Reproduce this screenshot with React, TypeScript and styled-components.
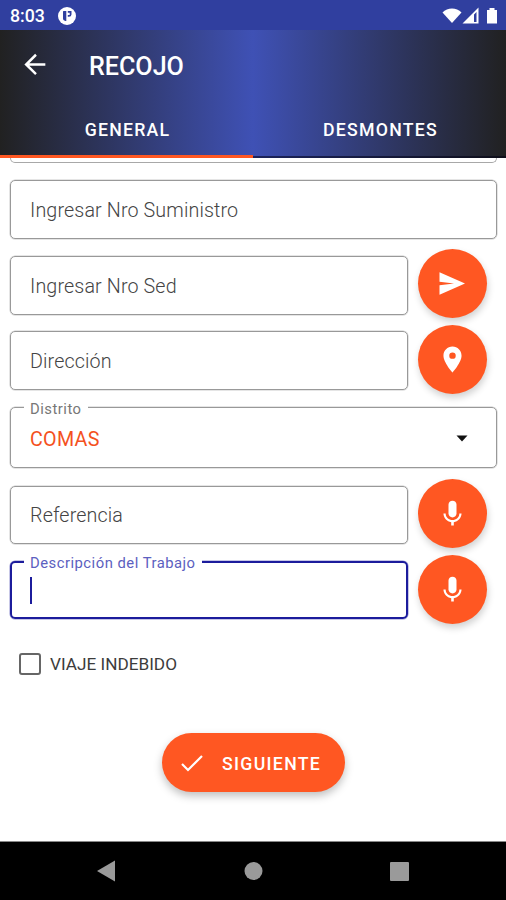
import React from 'react';
import styled, { createGlobalStyle } from 'styled-components';

const Global = createGlobalStyle`
  * { box-sizing: border-box; }
  body { margin: 0; background: #fff; font-family: Roboto, "Liberation Sans", sans-serif; }
`;

const Screen = styled.div`
  width: 506px;
  height: 900px;
  display: flex;
  flex-direction: column;
  overflow: hidden;
  background: #fff;
`;

const StatusBar = styled.div`
  flex: none;
  height: 30px;
  background: #303f9f;
  display: flex;
  align-items: center;
  padding: 2px 7px 0 10px;
  color: #fff;
`;

const Clock = styled.span`
  width: 48px;
  font-size: 17.7px;
  font-weight: 500;
`;

const StatusIcons = styled.div`
  margin-left: auto;
  display: flex;
`;

const Header = styled.header`
  flex: none;
  height: 128px;
  display: flex;
  flex-direction: column;
  background: linear-gradient(90deg, #212121, #3f51b5 50%, #212121);
  color: #fff;
`;

const Toolbar = styled.div`
  height: 70px;
  display: flex;
  align-items: center;
  padding-left: 18px;
`;

const BackButton = styled.button`
  display: flex;
  width: 34px;
  height: 34px;
  padding: 0;
  border: 0;
  background: none;
`;

const Title = styled.h1`
  margin: 3px 0 0 37px;
  font-size: 25.1px;
  font-weight: 500;
`;

const Tabs = styled.div`
  height: 58px;
  display: grid;
  grid-template-columns: 1fr 1fr;
`;

const Tab = styled.div<{ $active?: boolean }>`
  display: flex;
  align-items: center;
  justify-content: center;
  padding: ${p => (p.$active ? 4 : 3)}px 0 0 2px;
  height: 58px;
  font-size: 17.7px;
  font-weight: 500;
  letter-spacing: 1.25px;
  border-bottom: ${p => (p.$active ? '3px solid #ff5722' : '2px solid rgba(0, 0, 20, 0.55)')};
`;

const Form = styled.main`
  flex: 1;
  min-height: 0;
  padding: 0 9px 0 10px;
  display: flex;
  flex-direction: column;
`;

const ClippedField = styled.div`
  flex: none;
  height: 5px;
  margin-bottom: 17px;
  border: 1.5px solid #a8a8a8;
  border-top: 0;
  border-radius: 0 0 5px 5px;
`;

const Row = styled.div<{ $h: number; $gap: number }>`
  flex: none;
  display: flex;
  align-items: center;
  height: ${p => p.$h}px;
  margin-bottom: ${p => p.$gap}px;
`;

const Field = styled.fieldset<{ $wide?: boolean; $focus?: boolean; $h: number }>`
  position: relative;
  flex: none;
  width: ${p => (p.$wide ? 487 : 398)}px;
  height: ${p => p.$h}px;
  margin: 0;
  padding: 0 28px 0 19px;
  display: flex;
  align-items: center;
  justify-content: space-between;
  border: ${p => (p.$focus ? '2px solid #1c1c9c' : '1px solid #999')};
  border-radius: 5px;
  box-shadow: ${p => (p.$focus ? '0 0 0 0.5px #8f8fd0' : '0 0 0 0.5px #ccc')};
`;

const Placeholder = styled.span`
  padding-top: 1px;
  font-size: 19.7px;
  font-weight: 300;
  letter-spacing: 0.13px;
  color: #444;
`;

const FloatLabel = styled.span<{ $focus?: boolean }>`
  position: absolute;
  left: ${p => (p.$focus ? 12 : 13)}px;
  top: ${p => (p.$focus ? -9 : -8)}px;
  padding: 0 6px;
  background: #fff;
  font-size: 14.8px;
  line-height: 18px;
  letter-spacing: 0.5px;
  white-space: nowrap;
  color: ${p => (p.$focus ? '#5c60c0' : '#777')};
`;

const Value = styled.span`
  padding-top: 3px;
  font-size: 19.7px;
  letter-spacing: 0.3px;
  color: #f4511e;
`;

const Caret = styled.span`
  width: 2px;
  height: 27px;
  margin-left: -1px;
  background: #1c1c9c;
`;

const RoundButton = styled.button<{ $lift?: number }>`
  flex: none;
  width: 69px;
  height: 69px;
  margin: ${p => -(p.$lift ?? 3)}px 0 0 10px;
  padding: 0;
  border: 0;
  border-radius: 50%;
  background: #ff5722;
  display: flex;
  align-items: center;
  justify-content: center;
  box-shadow: 1px 4px 7px rgba(0, 0, 0, 0.18);
`;

const CheckRow = styled.label`
  display: flex;
  align-items: center;
  height: 24px;
  margin-top: 16px;
  padding-left: 9px;
  gap: 9px;
  font-size: 17.2px;
  color: #3c3c3c;
`;

const Box = styled.span`
  width: 22px;
  height: 22px;
  border: 2px solid #666;
  border-radius: 3px;
`;

const Next = styled.button`
  flex: none;
  align-self: flex-start;
  display: flex;
  align-items: center;
  width: 183px;
  height: 59px;
  margin: 57px 0 0 152px;
  padding: 2px 0 0 17px;
  gap: 17px;
  border: 0;
  border-radius: 30px;
  background: #ff5722;
  color: #fff;
  font: 500 17.7px Roboto, sans-serif;
  letter-spacing: 1.3px;
  box-shadow: 0 4px 8px rgba(0, 0, 0, 0.25);
`;

const NavBar = styled.nav`
  flex: none;
  height: 59px;
  background: #000;
  border-top: 1px solid #888;
  display: grid;
`;

const Send = () => (
  <svg width="31" height="31" viewBox="0 0 31 31" fill="#fff">
    <path d="M2.500 26.700V17.300L17 15.500 2.500 13.700V4.300L28 15.500z" />
  </svg>
);

const Pin = () => (
  <svg width="31" height="31" viewBox="0 0 24 24" fill="#fff">
    <path d="M12 2C8.1 2 5 5.1 5 9c0 5.2 7 13 7 13s7-7.800 7-13c0-3.900-3.100-7-7-7zm0 9.500a2.500 2.500 0 1 1 0-5 2.500 2.500 0 0 1 0 5z" />
  </svg>
);

const Mic = () => (
  <svg width="31" height="31" viewBox="0 0 24 24" fill="#fff">
    <path d="M12 15c1.700 0 3.100-1.300 3.100-3V5.200c0-1.700-1.400-3-3.100-3s-3.100 1.300-3.100 3V12c0 1.700 1.400 3 3.100 3z" />
    <path d="M17.300 12c0 3-2.500 5.100-5.300 5.100S6.700 15 6.700 12H5c0 3.400 2.700 6.200 6 6.700V21.300h2v-2.600c3.300-.5 6-3.300 6-6.700z" />
  </svg>
);

export default function App() {
  return (
    <Screen>
      <Global />
      <StatusBar>
        <Clock>8:03</Clock>
        <svg width="18" height="18" viewBox="0 0 18 18">
          <circle cx="9" cy="9" r="9" fill="#fff" />
          <path d="M5.500 4H8.300V14H7.500C5.500 13.500 5 12.500 5 11.500V4.500zM9.800 4h3.700v3.500a2.500 2.500 0 0 1-2.500 2.300H9.800V8h1.900V5.800H9.800z" fill="#303f9f" />
        </svg>
        <StatusIcons>
          <svg width="58" height="18" viewBox="0 0 58 18" fill="#fff">
            <path d="M1.500 5.500C6.500 0 15.500 0 20.500 5.500L11 16z" />
            <path fillRule="evenodd" d="M21.500 16.500L37.500 0.500v16zM33 7.500V15h2.500V5z" />
            <path d="M46 3H48.500V1h5v2H56V16.500H46z" />
          </svg>
        </StatusIcons>
      </StatusBar>
      <Header>
        <Toolbar>
          <BackButton aria-label="Volver">
            <svg width="34" height="34" viewBox="0 0 24 24" fill="#fff">
              <path d="M19.300 10.700H8l5.300-5.300L12.100 4.100 4.500 11.600l7.600 7.500 1.200-1.300L8 12.500h11.300z" />
            </svg>
          </BackButton>
          <Title>RECOJO</Title>
        </Toolbar>
        <Tabs>
          <Tab $active>GENERAL</Tab>
          <Tab>DESMONTES</Tab>
        </Tabs>
      </Header>
      <Form>
        <ClippedField />
        <Row $h={59} $gap={17}>
          <Field $wide $h={59}><Placeholder>Ingresar Nro Suministro</Placeholder></Field>
        </Row>
        <Row $h={59} $gap={16}>
          <Field $h={59}><Placeholder>Ingresar Nro Sed</Placeholder></Field>
          <RoundButton $lift={5} aria-label="Enviar"><Send /></RoundButton>
        </Row>
        <Row $h={59} $gap={17}>
          <Field $h={59}><Placeholder>Dirección</Placeholder></Field>
          <RoundButton aria-label="Ubicación"><Pin /></RoundButton>
        </Row>
        <Row $h={61} $gap={18}>
          <Field $wide $h={61}>
            <FloatLabel>Distrito</FloatLabel>
            <Value>COMAS</Value>
            <svg width="12" height="9" viewBox="0 0 12 9"><path d="M0.500 2.500h11L6 8.500z" fill="#111" /></svg>
          </Field>
        </Row>
        <Row $h={58} $gap={17}>
          <Field $h={58}><Placeholder>Referencia</Placeholder></Field>
          <RoundButton aria-label="Dictar referencia"><Mic /></RoundButton>
        </Row>
        <Row $h={58} $gap={17}>
          <Field $focus $h={58}>
            <FloatLabel $focus>Descripción del Trabajo</FloatLabel>
            <Caret />
          </Field>
          <RoundButton $lift={2} aria-label="Dictar descripción"><Mic /></RoundButton>
        </Row>
        <CheckRow><Box />VIAJE INDEBIDO</CheckRow>
        <Next>
          <svg width="26" height="26" viewBox="0 0 26 26" fill="none" stroke="#fff" strokeWidth="2.200">
            <path d="M3 13l6 6L23 5" />
          </svg>
          SIGUIENTE
        </Next>
      </Form>
      <NavBar>
        <svg width="506" height="57" viewBox="0 0 506 57" fill="#9a9a9a">
          <path d="M97 29L115 18.500v21z" />
          <circle cx="253.500" cy="29" r="9" />
          <rect x="390" y="20" width="19" height="19" rx="1" />
        </svg>
      </NavBar>
    </Screen>
  );
}
